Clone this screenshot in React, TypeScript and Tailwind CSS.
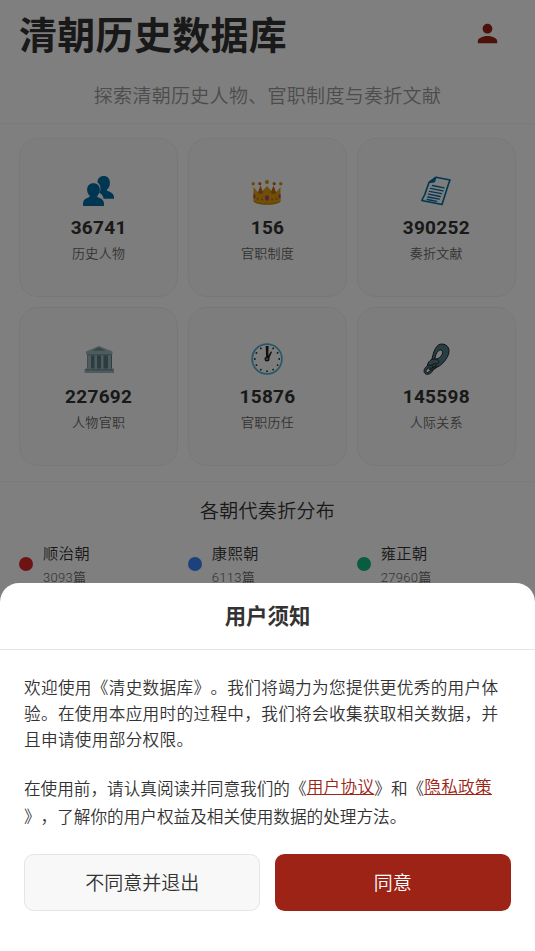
import type { ReactNode } from "react";

const PeopleIcon = () => (
  <svg viewBox="0 0 32 32" className="-ml-0.5 h-8 w-8" fill="#006da3">
    <path d="M21.800 1c-4 0-6.400 2.700-6.300 6.400 2.300 1.400 3.200 4 2.900 7-.1 1.500-.8 2.400-1.100 3.300 2.100 1.200 3.700 3.100 4.400 6.100H32v-2.200c-.6-3.200-3.200-4.600-6.400-5.500-.8-.4-.8-1.300-.4-1.800 1.800-1.400 2.700-3.700 2.700-6.400 0-4.300-2.600-6.900-6.100-6.900Z" />
    <path d="M11.300 8.200c-3.800 0-6.200 2.600-6.200 6.300 0 2.400.8 4.400 2.200 5.800.6.800.4 1.600-.5 2C3.600 23.300 1.300 24.900 1 28.300V31h21v-2.500c-.2-3.400-2.700-5.200-6-6.200-.9-.4-1-1.200-.4-1.900 1.500-1.400 2.300-3.400 2.300-5.900 0-3.800-2.600-6.300-6.600-6.300Z" />
  </svg>
);

const CrownIcon = () => (
  <svg viewBox="0 0 32 32" className="h-8 w-8">
    <path d="M2.500 12 7 17.500l4-1 5-5.500 5 5.500 4 1L29.500 12v14.500c-2 2.300-7 3.200-13.500 3.200S4.500 28.800 2.500 26.500Z" fill="#dca10c" />
    <path d="m9.500 10.500 2.800 7.200c-1.600 1.800-4 1.800-5.600 0ZM22.500 10.500l2.800 7.200c-1.600 1.800-4 1.800-5.600 0Z" fill="#c8661a" />
    <path d="M3 25.500c3 2.300 7.500 2.900 13 2.900s10-.6 13.400-2.900v1.300c-2.600 2-7.400 2.800-13.400 2.800S5.500 28.800 3 26.800Z" fill="#c18a10" />
    <circle cx="2.200" cy="8.700" r="1.700" fill="#d19a10" />
    <circle cx="8.800" cy="8.700" r="1.600" fill="#c46a20" />
    <circle cx="16" cy="7.100" r="2.100" fill="#d19a10" />
    <circle cx="23.200" cy="8.700" r="1.600" fill="#c46a20" />
    <circle cx="29.800" cy="8.700" r="1.700" fill="#d19a10" />
    <ellipse cx="16" cy="23" rx="2" ry="2.700" fill="#b03c86" />
    <path d="M2.500 19c2.600.3 2.600 4.400 0 4.700ZM29.500 19c-2.600.3-2.600 4.400 0 4.700Z" fill="#b03c86" />
    <g fill="#c8562c">
      <circle cx="6.700" cy="23.700" r="1" />
      <circle cx="11" cy="24.400" r="1" />
      <circle cx="21.200" cy="24.400" r="1" />
      <circle cx="25.500" cy="23.700" r="1" />
    </g>
  </svg>
);

const PageIcon = () => (
  <svg viewBox="0 0 32 32" className="h-8 w-8" fill="none" stroke="#006da3" strokeLinecap="round" strokeLinejoin="round">
    <path d="M16 2.200 30 5l-1.500 4L22 29.500 1.800 25.500l3-6L9 7.500Z" strokeWidth="1.600" />
    <path d="M16 2.500 14.500 7 9 7.500Z" fill="#006da3" strokeWidth="1" />
    <path d="m12.500 10.500 11.500 2.300M10.500 13.300l12.500 2.500M9.500 16.300l12 2.400M8.500 19.200l11.700 2.300M7.800 22l11.500 2.200M7.200 24.500l9.500 1.800" strokeWidth="1.300" />
  </svg>
);

const BuildingIcon = () => (
  <svg viewBox="0 0 32 32" className="h-8 w-8">
    <path d="M16 3 29.500 8.500v3H3v-3Z" fill="#9fb9bd" />
    <path d="m16 4.300 7 3.500H9Z" fill="#6d8d93" />
    <path d="M4 11h25v15H4Z" fill="#5b7980" />
    <path d="M4.500 11.500H8V26H4.500zM11.500 12H14v14h-2.500zM18 12h2.500v14H18zM25 11.500h3V26h-3z" fill="#9fb9bd" />
    <path d="M4 11h25v1.500H4z" fill="#7d9a9f" />
    <path d="M2 25.500h29v4.500H1.500v-2.500Z" fill="#9fb9bd" />
    <path d="M2.500 26.200H30v1.400H2.500z" fill="#6d8d93" />
  </svg>
);

const ClockIcon = () => (
  <svg viewBox="0 0 32 32" className="h-8 w-8">
    <circle cx="16" cy="16" r="14.900" fill="none" stroke="#4fb0d4" strokeWidth="1.700" />
    <g fill="#222">
      {Array.from({ length: 12 }, (_, i) => (
        <circle
          key={i}
          cx={16 + 12.2 * Math.sin((i * Math.PI) / 6)}
          cy={16 - 12.2 * Math.cos((i * Math.PI) / 6)}
          r=".9"
        />
      ))}
      <path d="M14.700 3h2.900l-.3 11h-2.200Z" />
      <path d="m20 8.300 1 .7-3.200 7.200-2.200-1.200Z" />
    </g>
    <circle cx="16" cy="16" r="2.500" fill="#222" />
    <circle cx="16" cy="16" r=".8" fill="#fff" />
  </svg>
);

const LinkIcon = () => (
  <svg viewBox="0 0 32 32" className="h-8 w-8" fillRule="evenodd" fill="#4f7c88" stroke="#222" strokeWidth="1">
    <path d="M18.500 2C23-.8 29.500 2.800 29 8.500c-.4 6-7 14.500-14 16.500-3 .8-5.200-1.800-4-5C12.500 14.500 13.500 5.500 18.500 2Zm.3 5.500c-2.600 1.800-3.500 6-4 8.200 2 .8 5.500-.8 7.200-4.200 1.600-3.300-.7-5.700-3.200-4Z" />
    <path d="M8 24c-1.600-1.800.8-6.500 4-7.600 4-1.300 8 1.100 6.600 3.500-1.200 2-4.600.1-6 1.400-1.200 1-.6 2.500-1.200 3.500Z" />
    <path d="M8.500 22.500c2.500-1 5.700.8 4.700 4.100-.8 2.800-4.200 5.400-6.700 4.600-3-.9-3-4-1.200-6.500.9-1.200 2-1.900 3.200-2.200Zm-.3 2.700c-1.700.8-3 3.300-1.700 4.200 1.500.8 4-1.400 4.200-3 .2-1.200-1.200-1.800-2.500-1.200Z" />
    <path d="M9.500 25.500c2 1.700 6.200-.7 7-3" fill="none" strokeWidth="2.600" />
    <path d="M9.500 25.500c2 1.700 6.200-.7 7-3" fill="none" stroke="#4f7c88" strokeWidth=".9" />
  </svg>
);

const stats: { icon: ReactNode; value: string; label: string }[] = [
  { icon: <PeopleIcon />, value: "36741", label: "历史人物" },
  { icon: <CrownIcon />, value: "156", label: "官职制度" },
  { icon: <PageIcon />, value: "390252", label: "奏折文献" },
  { icon: <BuildingIcon />, value: "227692", label: "人物官职" },
  { icon: <ClockIcon />, value: "15876", label: "官职历任" },
  { icon: <LinkIcon />, value: "145598", label: "人际关系" },
];

const dynasties = [
  { name: "顺治朝", count: "3093篇", dot: "bg-[#dc2626]" },
  { name: "康熙朝", count: "6113篇", dot: "bg-[#3b82f6]" },
  { name: "雍正朝", count: "27960篇", dot: "bg-[#10b981]" },
];

function Home() {
  return (
    <main className="h-full overflow-hidden bg-white">
      <header className="h-[123.500px] border-b border-[#f7f7f7]">
        <div className="flex h-[68px] items-center justify-between pl-[19px] pr-[33px]">
          <h1 className="pt-[3px] text-[38px] leading-[56px] font-bold tracking-[0.300px] text-[#333]">清朝历史数据库</h1>
          <svg viewBox="0 0 24 24" className="-mt-px h-[29px] w-[29px]" fill="#9c2315">
            <path d="M12 12c2.210 0 4-1.790 4-4s-1.790-4-4-4-4 1.790-4 4 1.790 4 4 4zm0 2c-2.670 0-8 1.340-8 4v2h16v-2c0-2.660-5.330-4-8-4z" />
          </svg>
        </div>
        <p className="mt-[15px] text-center text-[19px] leading-7 tracking-[0.300px] text-[#999]">
          探索清朝历史人物、官职制度与奏折文献
        </p>
      </header>
      <section className="grid h-[358px] grid-cols-3 gap-[9.500px] border-b border-[#f7f7f7] px-[19px] pt-[14.500px] pb-[15px]">
        {stats.map((s) => (
          <div
            key={s.label}
            className="flex flex-col items-center rounded-[19px] border border-[#f0f0f0] bg-[#fafafa] pt-[35.500px]"
          >
            {s.icon}
            <b className="mt-[8.500px] text-[19px] leading-[26px] tracking-[0.300px] text-[#333]">{s.value}</b>
            <span className="mt-[3px] text-[13px] leading-5 tracking-[0.300px] text-[#666]">{s.label}</span>
          </div>
        ))}
      </section>
      <section className="px-[19px] pt-[16.500px]">
        <h2 className="text-center text-[19px] leading-7 tracking-[0.300px] text-[#333]">各朝代奏折分布</h2>
        <div className="mt-[16px] grid grid-cols-3 gap-[9.500px]">
          {dynasties.map((d) => (
            <div key={d.name} className="flex items-center gap-[10px]">
              <i className={`-mt-[3px] h-[14px] w-[14px] rounded-full ${d.dot}`} />
              <div>
                <div className="text-[15.200px] leading-[24px] tracking-[0.500px] text-[#333]">{d.name}</div>
                <div className="mt-[2px] text-[13px] leading-5 tracking-[0.300px] text-[#666]">{d.count}</div>
              </div>
            </div>
          ))}
        </div>
      </section>
    </main>
  );
}

function ConsentSheet() {
  return (
    <div className="absolute inset-0 flex flex-col justify-end bg-black/50">
      <section className="flex h-[368.500px] flex-col rounded-t-[19px] bg-white text-[#333]">
        <h2 className="h-[67px] border-b border-[#e5e5e5] pt-[17px] text-center text-[21.400px] leading-[34px] font-bold">
          用户须知
        </h2>
        <div className="px-6 pt-[26.500px] whitespace-nowrap">
          <p className="text-[16.640px] leading-[26px] tracking-[0.320px]">
            欢迎使用《清史数据库》。我们将竭力为您提供更优秀的用户体
            <br />
            验。在使用本应用时的过程中，我们将会收集获取相关数据，并
            <br />
            且申请使用部分权限。
          </p>
          <p className="mt-[22px] text-[16.640px] leading-[27.500px]">
            在使用前，请认真阅读并同意我们的《
            <a className="relative -top-0.5 tracking-[0.300px] text-[#9c2315] underline">用户协议</a>
            》和《
            <a className="relative -top-0.5 tracking-[0.300px] text-[#9c2315] underline">隐私政策</a>
            <br />
            》，了解你的用户权益及相关使用数据的处理方法。
          </p>
        </div>
        <div className="mt-[22.500px] grid grid-cols-2 gap-[14.300px] px-6 text-[19px] leading-7">
          <button className="h-[57.500px] rounded-[9.500px] border border-[#e5e5e5] bg-[#f8f8f8] pt-[3px]">
            不同意并退出
          </button>
          <button className="h-[57.500px] rounded-[9.500px] bg-[#9c2315] pt-[3px] text-white">同意</button>
        </div>
      </section>
    </div>
  );
}

export default function App() {
  return (
    <div
      lang="zh-CN"
      className="relative h-screen w-full overflow-hidden font-['Roboto','Noto_Sans_CJK_SC',sans-serif] font-[350] [text-spacing-trim:space-all]"
    >
      <Home />
      <ConsentSheet />
    </div>
  );
}
